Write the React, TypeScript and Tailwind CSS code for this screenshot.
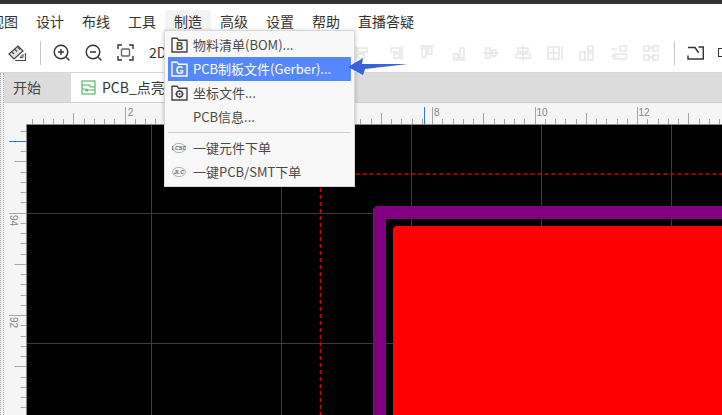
import { FC, ReactNode } from "react";

const SANS = "font-['Noto_Sans_CJK_SC','Liberation_Sans',sans-serif]";

const menuNames = ["视图", "设计", "布线", "工具", "制造", "高级", "设置", "帮助", "直播答疑"];

const Folder: FC<{ letter?: string; active?: boolean }> = ({ letter, active }) => {
  const c = active ? "#ffffff" : "#444444";
  return (
    <svg width="17" height="16" viewBox="0 0 17 16" fill="none" stroke={c} strokeWidth="1.4">
      <path d="M1 15V1.2h5l1.5 2H16V15z" />
      {letter ? (
        <text x="8.7" y="13" fontSize="10" textAnchor="middle" fill={c} stroke="none" fontFamily="Liberation Sans" fontWeight="700">{letter}</text>
      ) : (
        <>
          <circle cx="8.5" cy="9" r="3" strokeWidth="1.5" />
          <circle cx="8.5" cy="9" r="0.9" fill={c} stroke="none" />
          <path d="M8.5 4.8v1.2M8.5 12v1.2M4.3 9h1.2M11.5 9h1.2" strokeWidth="1" />
        </>
      )}
    </svg>
  );
};

const Badge: FC<{ label: string }> = ({ label }) => (
  <svg width="14" height="12" viewBox="0 0 14 12" fill="none" stroke="#9a9a9a" strokeWidth="0.8">
    <ellipse cx="7" cy="6" rx="6.4" ry="4.6" />
    <text x="7" y="8" fontSize="5.5" textAnchor="middle" fill="#666" stroke="none" fontStyle="italic" fontWeight="700" fontFamily="Liberation Sans">{label}</text>
  </svg>
);

const MenuItem: FC<{ icon?: ReactNode; label: string; active?: boolean }> = ({ icon, label, active }) => (
  <div className={`flex items-center h-6 mx-[3px] pl-[2px] text-[13px] ${active ? "bg-[#5588ff] text-white" : "text-[#4a4a4a]"}`}>
    <span className="w-[18px] flex justify-center mr-[5px]">{icon}</span>
    <span>{label}</span>
  </div>
);

const ZoomIcon: FC<{ plus?: boolean }> = ({ plus }) => (
  <svg width="17" height="17" viewBox="0 0 17 17" fill="none" stroke="#333" strokeWidth="1.4">
    <circle cx="8" cy="8" r="6.8" />
    <path d="M13 13l3.5 3.5M5 8h6" />
    {plus && <path d="M8 5v6" />}
  </svg>
);

const disabledIcons = [
  "M1 1v14M3 3h9v4H3zM3 9h6v4H3z",
  "M15 1v14M4 3h9v4H4zM7 9h6v4H7z",
  "M1 1h14M3 3h4v9H3zM9 3h4v6H9z",
  "M1 15h14M3 9h4v4H3zM9 3h4v10H9z",
  "M0 8h16M3 3h4v10H3zM9 5h4v6H9z",
  "M8 0v16M3 3h10v4H3zM1 9h14v4H1z",
  "M1 2h11v12H1zM6.5 2v12M1 8h11M15 1v14",
  "M1 7h5v8H1zM9 1h5v5H9zM9 8h5v7H9z",
  "M0 4h6M0 11h6M9 1h6v5H9zM3 9h12v5H3z",
  "M1 1h5v5H1zM10 1h5v5h-5zM1 10h5v5H1zM10 10h5v5h-5zM6 3h4M6 12h4",
];

// top ruler, one tick each 10.25px, x is relative to the strip at left
const TopRuler: FC = () => {
  const ticks = Array.from({ length: 70 }, (_, i) => i + 1);
  const labels = [
    { x: 124.7, t: "2" }, { x: 431, t: "8" }, { x: 533.5, t: "10" }, { x: 635.5, t: "12" },
  ];
  return (
    <svg width="718" height="21" className="block">
      {ticks.map((i) => {
        const x = Math.round(22 + i * 10.25 - 4) + 0.5;
        const n = i % 10;
        const h = n === 0 ? 17 : n === 5 ? 11 : 5;
        return <line key={i} x1={x} x2={x} y1={21} y2={21 - h} stroke="#a4a8ad" />;
      })}
      {labels.map((l) => (
        <text key={l.t} x={l.x - 4 + 3} y={13} fontSize="10" fill="#7e8790" fontFamily="Liberation Sans">{l.t}</text>
      ))}
      <line x1="420.5" x2="420.5" y1="4" y2="21" stroke="#2b78d0" />
    </svg>
  );
};

const LeftRuler: FC = () => {
  const ticks = Array.from({ length: 29 }, (_, i) => i);
  return (
    <svg width="22" height="291" className="block">
      {ticks.map((i) => {
        const y = Math.round(6.7 + i * 10.25) + 0.5;
        const n = (i + 22) % 10;
        const h = n === 0 ? 17 : n === 5 ? 11.5 : 5.5;
        return <line key={i} x1={22 - h} x2={22} y1={y} y2={y} stroke="#a4a8ad" />;
      })}
      <line x1="5" x2="22" y1="17.5" y2="17.5" stroke="#2b78d0" />
      <text fontSize="10" fill="#7e8790" fontFamily="Liberation Sans" transform="translate(6,91) rotate(90)">94</text>
      <text fontSize="10" fill="#7e8790" fontFamily="Liberation Sans" transform="translate(6,193) rotate(90)">92</text>
    </svg>
  );
};

const App: FC = () => {
  return (
    <div className={`relative w-[722px] h-[415px] overflow-hidden bg-white flex flex-col ${SANS}`}>
      <div className="h-1 bg-[#333333] shrink-0" />

      {/* menu bar */}
      <div className="h-[29px] shrink-0 flex items-start pt-[6px] -ml-[19px] text-[14px] text-[#333]">
        {menuNames.map((m) => (
          <div key={m} className={`px-[9px] h-[22px] flex items-center rounded-t-sm ${m === "制造" ? "bg-[#f3f3f3]" : ""}`}>{m}</div>
        ))}
      </div>

      {/* toolbar */}
      <div className="h-[40px] shrink-0 flex items-center border-b border-[#d8d8d8]">
        <svg width="18" height="18" viewBox="0 0 18 18" fill="none" stroke="#444" strokeWidth="1.2" className="ml-2 shrink-0">
          <path d="M1 10L10 2l5 5-9 8z" fill="#e2e2e2" />
          <path d="M4 8l2 2M7 5.5l2 2M10 3.5l2 2M7 16.5h10.5V9" />
          <path d="M12 13.5h3v-3z" strokeWidth="1" />
        </svg>
        <div className="w-px h-6 bg-[#c8c8c8] ml-[14px] mr-3 shrink-0" />
        <div className="flex items-center gap-[15px] shrink-0">
          <ZoomIcon plus />
          <ZoomIcon />
          <svg width="17" height="17" viewBox="0 0 17 17" fill="none" stroke="#333" strokeWidth="1.4">
            <path d="M1 5V1h4M12 1h4v4M16 12v4h-4M5 16H1v-4" />
            <rect x="4.5" y="5" width="8" height="7" rx="1" stroke="#666" />
          </svg>
          <span className="text-[14px] text-[#333] w-5">2D</span>
        </div>
        <div className="flex gap-4 ml-[186px] shrink-0">
          {disabledIcons.map((d) => (
            <svg key={d} width="16" height="16" viewBox="0 0 16 16" fill="none" stroke="#e6e6e6" strokeWidth="1.5">
              <path d={d} />
            </svg>
          ))}
        </div>
        <div className="ml-[15px] w-px h-6 bg-[#c8c8c8] shrink-0" />
        <svg className="ml-3 shrink-0" width="17" height="14" viewBox="0 0 17 14" fill="none" stroke="#333" strokeWidth="1.4">
          <path d="M1 1.5h7l3 4.5h1M11.5 1h4.8v12H1V9.5" />
        </svg>
        <div className="ml-[14px] w-2 h-[9px] border border-[#333] shrink-0" />
      </div>

      <div className="flex flex-1 min-h-0">
        <div className="w-1 shrink-0 bg-[#f0f0f0] border-x border-dotted border-[#aaaaaa]" />

        <div className="flex-1 min-w-0 flex flex-col">
          {/* tabs */}
          <div className="h-[30px] shrink-0 flex bg-[#dcdcdc] border-b border-[#d0d0d0] text-[14px] text-[#444]">
            <div className="w-[67px] pl-[9px] flex items-center">开始</div>
            <div className="w-[260px] pl-[10px] bg-white flex items-center gap-[6px] text-[#333]">
              <svg width="15" height="15" viewBox="0 0 15 15" fill="none" stroke="#46b35a" strokeWidth="1.1">
                <rect x="1" y="1" width="13" height="13" />
                <path d="M1 5h7l2 2h4M1 9h3M6 10h8" />
                <circle cx="5.5" cy="10" r="1" />
              </svg>
              <span>PCB_点亮</span>
            </div>
          </div>

          {/* ruler + board */}
          <div className="flex-1 min-h-0 bg-[#f5f5f5] flex flex-col">
            <div className="h-[21px] shrink-0"><TopRuler /></div>
            <div className="flex flex-1 min-h-0">
              <div className="w-[22px] shrink-0"><LeftRuler /></div>
              <div className="relative flex-1 bg-black border-l border-t border-[#8a8a8a] overflow-hidden">
                {/* grid lines */}
                <div className="absolute left-[124px] top-0 bottom-0 w-px bg-[#3c3c3c]" />
                <div className="absolute left-[254px] top-0 bottom-0 w-px bg-[#3c3c3c]" />
                <div className="absolute left-[384px] top-0 bottom-0 w-px bg-[#3c3c3c]" />
                <div className="absolute left-[514px] top-0 bottom-0 w-px bg-[#3c3c3c]" />
                <div className="absolute left-[644px] top-0 bottom-0 w-px bg-[#3c3c3c]" />
                <div className="absolute left-0 right-0 top-[88px] h-px bg-[#3c3c3c]" />
                <div className="absolute left-0 right-0 top-[218px] h-px bg-[#3c3c3c]" />
                {/* origin cross */}
                <svg className="absolute left-0 top-0" width="695" height="290" fill="none" stroke="#d80000" strokeWidth="1.4" strokeDasharray="4 3">
                  <path d="M293.5 0V290M293.5 49H695" />
                </svg>
                {/* board */}
                <div className="absolute left-[346px] top-[81px] w-[420px] h-[300px] border-[13px] border-[#800080] rounded-[5px]" />
                <div className="absolute left-[366px] top-[101px] w-[400px] h-[300px] bg-[#ff0000] rounded-[4px]" />
              </div>
            </div>
          </div>
        </div>
      </div>

      {/* open menu */}
      <div className="absolute left-[164px] top-[30px] w-[191px] h-[157px] bg-[#f8f8f8] border border-[#d8d8d8] shadow-[0_1px_4px_rgba(0,0,0,0.25)] pt-[2px]">
        <MenuItem icon={<Folder letter="B" />} label="物料清单(BOM)..." />
        <MenuItem icon={<Folder letter="G" active />} label="PCB制板文件(Gerber)..." active />
        <MenuItem icon={<Folder />} label="坐标文件..." />
        <MenuItem label="PCB信息..." />
        <div className="h-px bg-[#cccccc] mx-[3px] my-[3px]" />
        <MenuItem icon={<Badge label="LCSC" />} label="一键元件下单" />
        <MenuItem icon={<Badge label="JLC" />} label="一键PCB/SMT下单" />
      </div>

      {/* annotation arrow */}
      <svg className="absolute left-[346px] top-[56px]" width="64" height="20" viewBox="0 0 64 20">
        <path d="M2 11L17 2l-1 6 46 0-43 5-2 6z" fill="#3a62d8" />
      </svg>
    </div>
  );
};

export default App;
